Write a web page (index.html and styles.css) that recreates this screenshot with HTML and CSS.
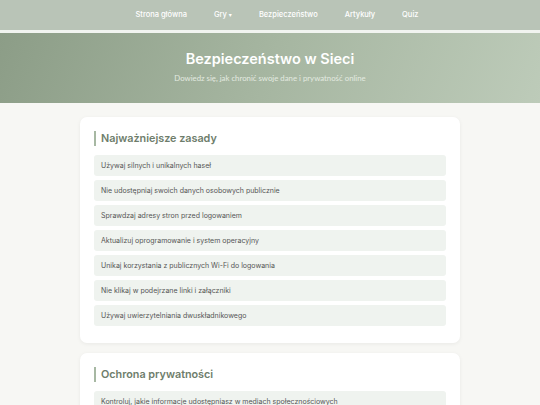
FILE: index.html
```html
<!DOCTYPE html>
<html lang="pl">
<head>
<meta charset="utf-8">
<title>Bezpieczeństwo w Sieci</title>
<link rel="stylesheet" href="styles.css">
</head>
<body>
<nav class="nav">
  <ul class="nav-list">
    <li><a href="#">Strona główna</a></li>
    <li><a href="#">Gry <span class="caret">▾</span></a></li>
    <li><a href="#">Bezpieczeństwo</a></li>
    <li><a href="#">Artykuły</a></li>
    <li><a href="#">Quiz</a></li>
  </ul>
</nav>
<header class="hero">
  <h1 class="hero-title">Bezpieczeństwo w Sieci</h1>
  <p class="hero-sub">Dowiedz się, jak chronić swoje dane i prywatność online</p>
</header>
<main class="main">
  <section class="card">
    <h2 class="card-title">Najważniejsze zasady</h2>
    <ul class="tips">
      <li>Używaj silnych i unikalnych haseł</li>
      <li>Nie udostępniaj swoich danych osobowych publicznie</li>
      <li>Sprawdzaj adresy stron przed logowaniem</li>
      <li>Aktualizuj oprogramowanie i system operacyjny</li>
      <li>Unikaj korzystania z publicznych Wi-Fi do logowania</li>
      <li>Nie klikaj w podejrzane linki i załączniki</li>
      <li>Używaj uwierzytelniania dwuskładnikowego</li>
    </ul>
  </section>
  <section class="card">
    <h2 class="card-title">Ochrona prywatności</h2>
    <ul class="tips">
      <li>Kontroluj, jakie informacje udostępniasz w mediach społecznościowych</li>
      <li>Sprawdzaj ustawienia prywatności w aplikacjach</li>
    </ul>
  </section>
</main>
</body>
</html>
```
FILE: styles.css
```css
* { box-sizing: border-box; }
html, body { margin: 0; padding: 0; }
body {
  background: #f7f7f4;
  font-family: Inter, "DejaVu Sans", sans-serif;
  color: #555;
}
.nav {
  background: #b9c4b7;
  height: 33px;
  border-bottom: 3px solid #f1f4f0;
}
.nav-list {
  list-style: none;
  margin: 0;
  padding: 0 0 0 14px;
  height: 30px;
  display: flex;
  justify-content: center;
  align-items: center;
  gap: 27px;
  font-size: 7.5px;
  line-height: 10px;
}
.nav-list a {
  color: #fff;
  text-decoration: none;
  font-weight: 500;
}
.caret { font-size: 6px; }
.hero {
  height: 70px;
  background: linear-gradient(110deg, #8c9d87 0%, #a6b6a1 50%, #bdcbb9 100%);
  text-align: center;
  padding-top: 16px;
}
.hero-title {
  margin: 0;
  color: #fff;
  font-size: 14.5px;
  font-weight: 600;
  line-height: 20px;
}
.hero-sub {
  margin: 0;
  margin-top: 4px;
  color: #e3eae0;
  font-family: Lato, sans-serif;
  font-size: 7.8px;
  line-height: 10px;
}
.main {
  padding: 14px 80px 0 80px;
  display: flex;
  flex-direction: column;
  gap: 10px;
}
.card {
  background: #fff;
  border-radius: 7px;
  box-shadow: 0 1px 4px rgba(0,0,0,0.06);
  padding: 14px 14px 17px 14px;
}
.card-title {
  margin: 0 0 9px 0;
  border-left: 2px solid #a7b8a3;
  padding-left: 5px;
  font-size: 10.8px;
  font-weight: 600;
  color: #6e7d6b;
  line-height: 15px;
}
.tips {
  list-style: none;
  margin: 0;
  padding: 0;
  display: flex;
  flex-direction: column;
  gap: 4px;
}
.tips li {
  background: #eff3ef;
  border-radius: 3px;
  height: 21px;
  line-height: 21px;
  padding-left: 7px;
  font-size: 7px;
  color: #555;
}
```
